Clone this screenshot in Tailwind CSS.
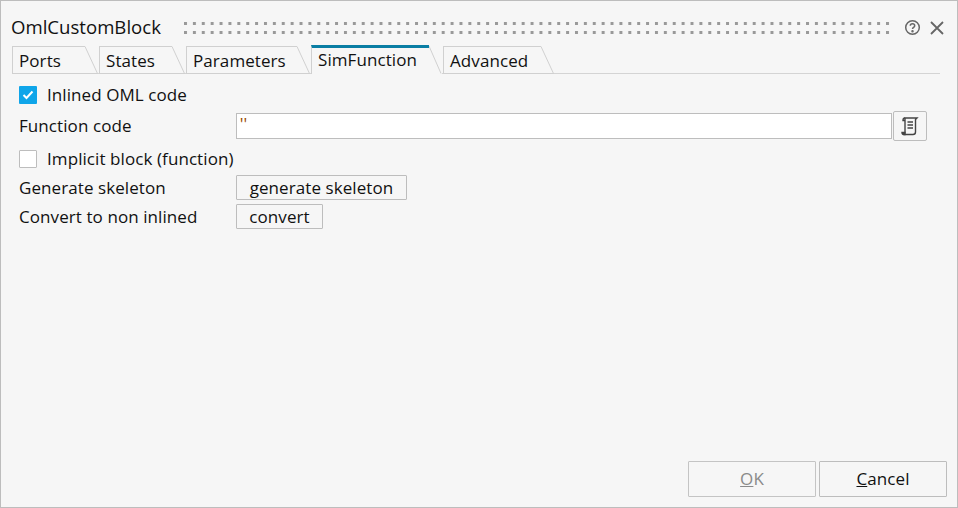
<!doctype html>
<html>
<head>
<meta charset="utf-8">
<script src="https://cdn.jsdelivr.net/npm/@tailwindcss/browser@4"></script>
</head>
<body class="m-0">
<div class="w-[958px] h-[508px] box-border border border-[#bdbdbd] bg-[#f6f6f6] flex flex-col text-[#111] font-['Open_Sans',sans-serif] text-[17px] tracking-[0.08px] overflow-hidden relative">
  <!-- Title bar -->
  <div class="h-[45px] shrink-0 flex items-center pl-[10px] pr-[12px] pt-[8px]">
    <span class="text-[18.6px] tracking-normal leading-none w-[173px]">OmlCustomBlock</span>
    <svg width="706" height="12" class="block"><defs><pattern id="d" width="8.886" height="9" patternUnits="userSpaceOnUse"><rect x="0" y="0" width="3" height="3" fill="#999"/></pattern></defs><rect width="706" height="12" fill="url(#d)"/></svg>
    <svg class="ml-[14px]" width="17" height="17" viewBox="0 0 17 17" fill="none" stroke="#666" stroke-width="1.5"><circle cx="8.5" cy="8.5" r="6.8"/><path d="M6.3 6.8c0-1.3 1-2 2.2-2s2.2.8 2.2 1.9c0 1.6-2.2 1.7-2.2 3.3" /><circle cx="8.5" cy="12.3" r=".5" fill="#666" stroke="#666"/></svg>
    <svg class="ml-[8px]" width="16" height="16" viewBox="0 0 16 16" fill="none" stroke="#666" stroke-width="1.8"><path d="M2 2l12 12M14 2L2 14"/></svg>
  </div>
  <!-- Tabs -->
  <div class="h-[28px] shrink-0 ml-[11px] mr-[17px] flex items-stretch gap-[1px] border-b border-[#d4d4d4]">
    <div class="flex -mb-px border-b border-[#d0d0d0]">
      <div class="w-[73px] border-l border-t border-[#d0d0d0] pl-[6px] leading-[27px]">Ports</div>
      <svg width="13" height="28" class="block"><path d="M0 .5L12.5 27.5" stroke="#d0d0d0" fill="none"/></svg>
    </div>
    <div class="flex -mb-px border-b border-[#d0d0d0]">
      <div class="w-[73px] border-l border-t border-[#d0d0d0] pl-[6px] leading-[27px]">States</div>
      <svg width="13" height="28" class="block"><path d="M0 .5L12.5 27.5" stroke="#d0d0d0" fill="none"/></svg>
    </div>
    <div class="flex -mb-px border-b border-[#d0d0d0]">
      <div class="w-[111px] border-l border-t border-[#d0d0d0] pl-[6px] leading-[27px]">Parameters</div>
      <svg width="13" height="28" class="block"><path d="M0 .5L12.5 27.5" stroke="#d0d0d0" fill="none"/></svg>
    </div>
    <div class="flex -mb-px -mt-px bg-[#f6f6f6] h-[29px]">
      <div class="w-[118px] border-l border-[#d0d0d0] border-t-[3px] border-t-[#0a7ea4] pl-[6px] leading-[23px]">SimFunction</div>
      <svg width="13" height="29" class="block"><path d="M0 1L12 28.5" stroke="#d0d0d0" fill="none"/></svg>
    </div>
    <div class="flex -mb-px border-b border-[#d0d0d0]">
      <div class="w-[98px] border-l border-t border-[#d0d0d0] pl-[6px] leading-[27px]">Advanced</div>
      <svg width="13" height="28" class="block"><path d="M0 .5L12.5 27.5" stroke="#d0d0d0" fill="none"/></svg>
    </div>
  </div>
  <!-- Form -->
  <div class="flex-1 flex flex-col pl-[18px] pr-[30px]">
    <div class="flex items-center h-[24px] mt-[9px]">
      <span class="w-[18px] h-[18px] bg-[#0fa5e9] rounded-[1px] flex items-center justify-center">
        <svg width="12" height="10" viewBox="0 0 12 10" fill="none" stroke="#fff" stroke-width="2"><path d="M1.5 5l3 3 6-6.5"/></svg>
      </span>
      <span class="ml-[10px]">Inlined OML code</span>
    </div>
    <div class="flex items-center h-[28px] mt-[5px]">
      <span class="w-[217px]">Function code</span>
      <div class="w-[657px] h-[26px] bg-white border border-[#bdbdbd] pl-[3px] leading-[20px] text-[#9a4a00]">''</div>
      <button class="w-[34px] h-[30px] -my-px ml-[1px] bg-[#f6f6f6] border border-[#bdbdbd] rounded-[2px] flex items-center justify-center">
        <svg width="18" height="20" viewBox="0 0 18 20" fill="none" stroke="#444" stroke-width="1.4"><path d="M4 2h12l-1.5 1.5V16c0 1.5-1 2.5-2.5 2.5H2.5C4 18 4 17 4 16z"/><path d="M4 2c-1.5 0-2 1-2 2.5h2M6.5 6h5.5M6.5 9h5.5M6.5 12h5.5" /><path d="M1 16.5h3v2H2.5c-1 0-1.5-1-1.5-2z" fill="#444"/></svg>
      </button>
    </div>
    <div class="flex items-center h-[24px] mt-[7px]">
      <span class="w-[18px] h-[18px] bg-white border border-[#bdbdbd] rounded-[1px]"></span>
      <span class="ml-[10px]">Implicit block (function)</span>
    </div>
    <div class="flex items-center h-[25px] mt-[4px]">
      <span class="w-[217px]">Generate skeleton</span>
      <button class="h-[25px] w-[171px] border border-[#bdbdbd] rounded-[1px] bg-[#f6f6f6] leading-[22px]">generate skeleton</button>
    </div>
    <div class="flex items-center h-[25px] mt-[4px]">
      <span class="w-[217px]">Convert to non inlined</span>
      <button class="h-[25px] w-[87px] border border-[#bdbdbd] rounded-[1px] bg-[#f6f6f6] leading-[22px]">convert</button>
    </div>
  </div>
  <!-- Footer -->
  <div class="flex justify-end gap-[3px] pr-[10px] pb-[10px]">
    <button class="w-[128px] h-[36px] border border-[#c4c4c4] rounded-[1px] text-[#8a8a8a]"><span class="underline">O</span>K</button>
    <button class="w-[128px] h-[36px] border border-[#bdbdbd] rounded-[1px]"><span class="underline">C</span>ancel</button>
  </div>
</div>
</body>
</html>
